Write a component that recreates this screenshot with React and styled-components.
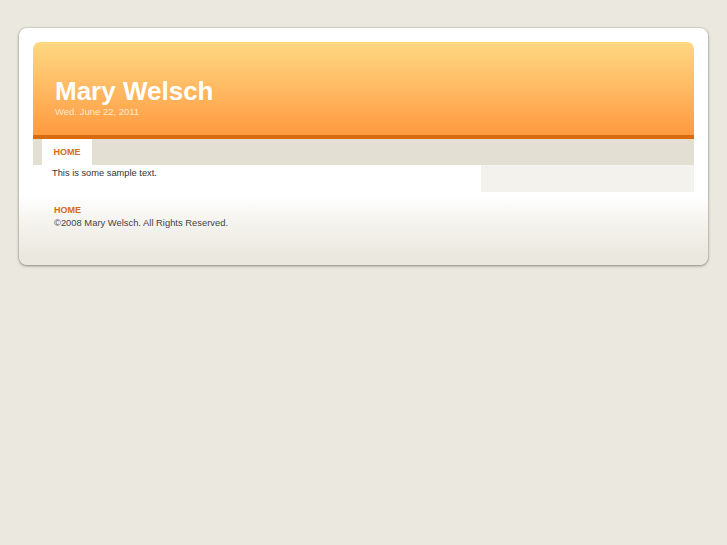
import React from 'react';
import styled, { createGlobalStyle } from 'styled-components';

const GlobalStyle = createGlobalStyle`
	html, body {
		margin: 0;
		padding: 0;
		background: #ebe8df;
		font-family: "Liberation Sans", Arial, sans-serif;
	}
`;

export default function App() {
	return (
		<Page>
			<GlobalStyle />
			<Card>
				<Header>
					<Title>Mary Welsch</Title>
					<DateLine>Wed. June 22, 2011</DateLine>
				</Header>
				<NavBar>
					<NavTab>HOME</NavTab>
				</NavBar>
				<ContentRow>
					<MainText>This is some sample text.</MainText>
					<Sidebar />
				</ContentRow>
				<Footer>
					<FooterLink>HOME</FooterLink>
					<Copyright>©2008 Mary Welsch. All Rights Reserved.</Copyright>
				</Footer>
			</Card>
		</Page>
	);
}

const Page = styled.div`
	padding: 28px 19px;
`;

const Card = styled.div`
	width: 689px;
	box-sizing: border-box;
	padding: 14px 14px 0;
	border-radius: 8px;
	background: linear-gradient(
		to bottom,
		#ffffff 0,
		#ffffff 168px,
		#f6f5f0 190px,
		#ebe8df 228px
	);
	box-shadow: 0 1px 3px rgba(70, 65, 55, 0.55), 0 0 1px rgba(70, 65, 55, 0.7);
`;

const Header = styled.div`
	height: 97px;
	box-sizing: border-box;
	display: flex;
	flex-direction: column;
	justify-content: flex-end;
	padding: 0 0 17px 22px;
	border-radius: 7px 7px 0 0;
	background: linear-gradient(to bottom, #ffd882 0%, #ffb962 50%, #ff9a40 100%);
	border-bottom: 4px solid #d96b0f;
`;

const Title = styled.h1`
	margin: 0;
	font-size: 26px;
	line-height: 30px;
	font-weight: bold;
	color: #ffffff;
`;

const DateLine = styled.div`
	font-size: 9.5px;
	line-height: 12px;
	color: #ffe8c8;
`;

const NavBar = styled.div`
	height: 26px;
	display: flex;
	padding-left: 9px;
	background: #e3dfd2;
`;

const NavTab = styled.a`
	width: 50px;
	display: flex;
	align-items: center;
	justify-content: center;
	padding-bottom: 1px;
	box-sizing: border-box;
	background: #ffffff;
	color: #d86a1c;
	font-size: 9px;
	font-weight: bold;
`;

const ContentRow = styled.div`
	display: flex;
	height: 27px;
`;

const MainText = styled.p`
	flex: 1;
	margin: 0;
	padding: 2px 0 0 19px;
	font-size: 9.3px;
	line-height: 12px;
	color: #333333;
`;

const Sidebar = styled.div`
	width: 213px;
	background: #f3f2ed;
`;

const Footer = styled.div`
	padding: 12px 0 36px 21px;
`;

const FooterLink = styled.a`
	display: block;
	font-size: 9px;
	line-height: 12px;
	font-weight: bold;
	color: #d86a1c;
`;

const Copyright = styled.div`
	font-size: 9.4px;
	line-height: 12px;
	color: #444444;
	margin-top: 1px;
`;
